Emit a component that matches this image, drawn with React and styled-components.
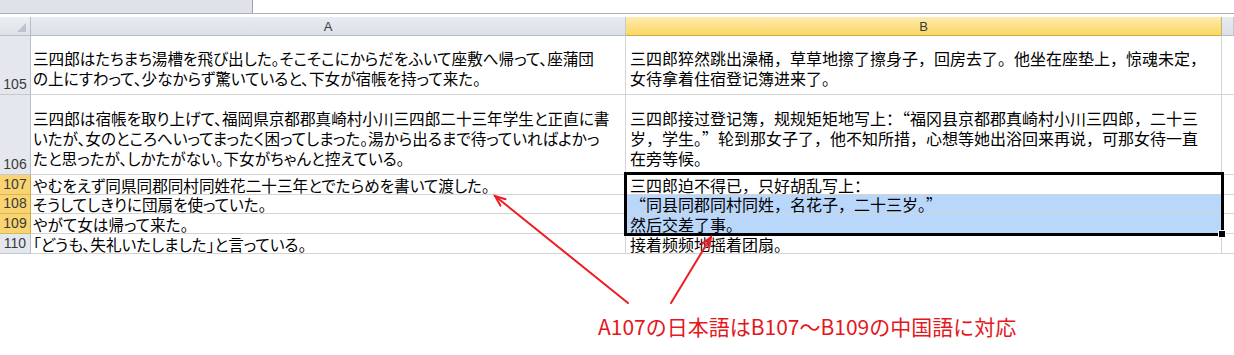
import styled, { createGlobalStyle } from "styled-components";

const GlobalStyle = createGlobalStyle`
  body {
    margin: 0;
    background: #ffffff;
  }
`;

const Page = styled.div`
  position: relative;
  width: 1234px;
  height: 355px;
  overflow: hidden;
  background: #ffffff;
`;

const TopBar = styled.div`
  display: flex;
  height: 13px;
  border-bottom: 1px solid #a9b1bb;
`;

const NameBox = styled.div`
  width: 252px;
  background: #dfe3e9;
  border-right: 1px solid #9aa4b1;
`;

const FormulaBox = styled.div`
  flex: 1;
  background: #ffffff;
`;

const SheetWrap = styled.div`
  position: relative;
  margin-top: 3px;
`;

const Sheet = styled.div`
  display: grid;
  grid-template-columns: 31px 595px 596px 1fr;
  grid-template-rows: 19px 59px 80px 20px 19px 20px 20px;
`;

const Corner = styled.div`
  position: relative;
  box-sizing: border-box;
  background: linear-gradient(#eceff3, #dde2e8);
  border-right: 1px solid #b7bec8;
  border-bottom: 1px solid #b7bec8;

  &::after {
    content: "";
    position: absolute;
    right: 4px;
    bottom: 3px;
    width: 0;
    height: 0;
    border-left: 9px solid transparent;
    border-bottom: 9px solid #bcc3cc;
  }
`;

const ColHeader = styled.div`
  box-sizing: border-box;
  display: flex;
  align-items: center;
  justify-content: center;
  font-family: "Liberation Sans", Arial, sans-serif;
  font-size: 13px;
  color: #3a3a3a;
  background: ${(p) =>
    p.$selected
      ? "linear-gradient(#fdebb0, #fbd762)"
      : "linear-gradient(#e9ecf1, #dbe0e7)"};
  border-right: 1px solid ${(p) => (p.$selected ? "#c9b277" : "#c3c9d1")};
  border-bottom: 1px solid ${(p) => (p.$selected ? "#c9a94f" : "#b7bec8")};
`;

const RowHeader = styled.div`
  box-sizing: border-box;
  display: flex;
  align-items: flex-end;
  justify-content: center;
  padding-bottom: 1px;
  font-family: "Liberation Sans", Arial, sans-serif;
  font-size: 14px;
  line-height: 17px;
  color: #3a3a3a;
  background: ${(p) => (p.$selected ? "#f9d470" : "#e4e8ee")};
  border-right: 1px solid ${(p) => (p.$selected ? "#c9a94f" : "#b7bec8")};
  border-bottom: 1px solid ${(p) => (p.$selected ? "#d8b65a" : "#c3c9d1")};
`;

const Cell = styled.div`
  box-sizing: border-box;
  display: flex;
  flex-direction: column;
  justify-content: ${(p) => (p.$tall ? "flex-end" : "center")};
  padding: 0 3px ${(p) => (p.$tall ? "6px" : "0")} ${(p) => (p.$lang === "zh" ? "4px" : "2px")};
  background: ${(p) => (p.$highlight ? "#b8d7fa" : "#ffffff")};
  border-right: 1px solid #d4d4d4;
  border-bottom: 1px solid #d4d4d4;
  font-family: ${(p) =>
    p.$lang === "zh"
      ? '"Noto Sans CJK SC", sans-serif'
      : '"Noto Sans CJK JP", sans-serif'};
  font-size: ${(p) => (p.$lang === "zh" ? "16px" : "15.6px")};
  font-feature-settings: ${(p) => (p.$lang === "zh" ? "normal" : '"palt"')};
  line-height: ${(p) => (p.$tall ? "20px" : "18px")};
  color: #000000;
`;

const Line = styled.div`
  white-space: nowrap;
`;

const EmptyCell = styled.div`
  box-sizing: border-box;
  border-bottom: 1px solid #d4d4d4;
  background: #ffffff;
`;

const SelectionBox = styled.div`
  position: absolute;
  left: 624px;
  top: 155px;
  width: 600px;
  height: 64px;
  box-sizing: border-box;
  border: 3px solid #000000;
  pointer-events: none;
`;

const FillHandle = styled.div`
  position: absolute;
  left: 1218px;
  top: 213px;
  width: 8px;
  height: 8px;
  box-sizing: border-box;
  background: #000000;
  border: 1px solid #ffffff;
`;

const Note = styled.div`
  padding: 59px 0 0 598px;
  font-family: "Noto Sans CJK JP", sans-serif;
  font-size: 21px;
  line-height: 26px;
  color: #e3171d;
  white-space: nowrap;
`;

const Arrows = styled.svg`
  position: absolute;
  left: 0;
  top: 0;
  pointer-events: none;
`;

const rows = [
  {
    num: 105,
    ja: [
      "三四郎はたちまち湯槽を飛び出した。そこそこにからだをふいて座敷へ帰って、座蒲団",
      "の上にすわって、少なからず驚いていると、下女が宿帳を持って来た。",
    ],
    zh: [
      "三四郎猝然跳出澡桶，草草地擦了擦身子，回房去了。他坐在座垫上，惊魂未定，",
      "女待拿着住宿登记簿进来了。",
    ],
    tall: true,
  },
  {
    num: 106,
    ja: [
      "三四郎は宿帳を取り上げて、福岡県京都郡真崎村小川三四郎二十三年学生と正直に書",
      "いたが、女のところへいってまったく困ってしまった。湯から出るまで待っていればよかっ",
      "たと思ったが、しかたがない。下女がちゃんと控えている。",
    ],
    zh: [
      "三四郎接过登记簿，规规矩矩地写上：“福冈县京都郡真崎村小川三四郎，二十三",
      "岁，学生。”轮到那女子了，他不知所措，心想等她出浴回来再说，可那女待一直",
      "在旁等候。",
    ],
    tall: true,
  },
  {
    num: 107,
    ja: ["やむをえず同県同郡同村同姓花二十三年とでたらめを書いて渡した。"],
    zh: ["三四郎迫不得已，只好胡乱写上："],
    selected: true,
  },
  {
    num: 108,
    ja: ["そうしてしきりに団扇を使っていた。"],
    zh: ["“同县同郡同村同姓，名花子，二十三岁。”"],
    selected: true,
    highlight: true,
  },
  {
    num: 109,
    ja: ["やがて女は帰って来た。"],
    zh: ["然后交差了事。"],
    selected: true,
    highlight: true,
  },
  {
    num: 110,
    ja: ["「どうも、失礼いたしました」と言っている。"],
    zh: ["接着频频地摇着团扇。"],
  },
];

const Arrow = ({ x1, y1, x2, y2 }) => {
  const a = Math.atan2(y2 - y1, x2 - x1);
  const len = 11;
  const spread = 0.38;
  const p1 = [x2 - len * Math.cos(a - spread), y2 - len * Math.sin(a - spread)];
  const p2 = [x2 - len * Math.cos(a + spread), y2 - len * Math.sin(a + spread)];
  return (
    <g stroke="#ee1c24" strokeWidth="2" fill="none" strokeLinecap="round">
      <line x1={x1} y1={y1} x2={x2} y2={y2} />
      <polyline points={`${p1[0]},${p1[1]} ${x2},${y2} ${p2[0]},${p2[1]}`} />
    </g>
  );
};

const App = () => {
  return (
    <Page>
      <GlobalStyle />
      <TopBar>
        <NameBox />
        <FormulaBox />
      </TopBar>
      <SheetWrap>
        <Sheet>
          <Corner />
          <ColHeader>A</ColHeader>
          <ColHeader $selected>B</ColHeader>
          <ColHeader />
          {rows.map((r) => [
            <RowHeader key={`h${r.num}`} $selected={r.selected}>
              {r.num}
            </RowHeader>,
            <Cell key={`a${r.num}`} $lang="ja" $tall={r.tall}>
              {r.ja.map((t, i) => (
                <Line key={i}>{t}</Line>
              ))}
            </Cell>,
            <Cell
              key={`b${r.num}`}
              $lang="zh"
              $tall={r.tall}
              $highlight={r.highlight}
            >
              {r.zh.map((t, i) => (
                <Line key={i}>{t}</Line>
              ))}
            </Cell>,
            <EmptyCell key={`c${r.num}`} />,
          ])}
        </Sheet>
        <SelectionBox />
        <FillHandle />
      </SheetWrap>
      <Note>A107の日本語はB107～B109の中国語に対応</Note>
      <Arrows width="1234" height="355">
        <Arrow x1={628} y1={303} x2={495} y2={196} />
        <Arrow x1={671} y1={303} x2={711} y2={237} />
      </Arrows>
    </Page>
  );
};

export default App;
